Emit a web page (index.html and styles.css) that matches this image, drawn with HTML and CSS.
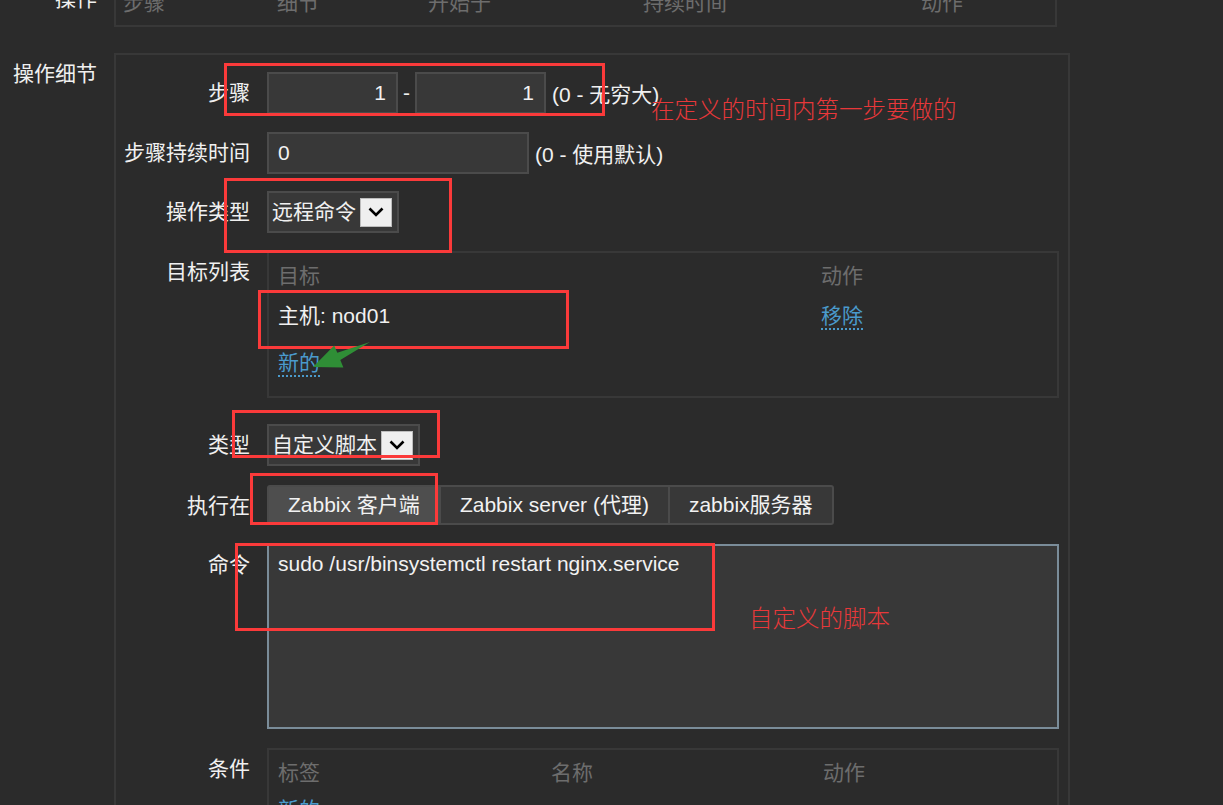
FILE: index.html
```html
<!DOCTYPE html>
<html lang="zh-CN">
<head>
<meta charset="utf-8">
<title>操作细节</title>
<link rel="stylesheet" href="styles.css">
</head>
<body>
<div class="page">
  <section class="form-row ops-row">
    <div class="outer-label">操作</div>
    <div class="ops-table">
      <span>步骤</span><span>细节</span><span>开始于</span><span>持续时间</span><span>动作</span>
    </div>
  </section>

  <section class="form-row details-row">
    <div class="outer-label">操作细节</div>
    <div class="details-box">
      <div class="field field-step">
        <div class="field-label">步骤</div>
        <div class="field-body">
          <input class="text-input step-input" type="text" value="1">
          <span class="dash">-</span>
          <input class="text-input step-input" type="text" value="1">
          <span class="hint">(0 - 无穷大)</span>
        </div>
      </div>

      <div class="field field-duration">
        <div class="field-label">步骤持续时间</div>
        <div class="field-body">
          <input class="text-input duration-input" type="text" value="0">
          <span class="hint">(0 - 使用默认)</span>
        </div>
      </div>

      <div class="field field-optype">
        <div class="field-label">操作类型</div>
        <div class="field-body">
          <div class="select">
            <span class="select-text">远程命令</span>
            <span class="select-arrow"><svg width="16" height="10" viewBox="0 0 16 10"><path d="M1.5 1.5 L8 8 L14.5 1.5" fill="none" stroke="#000" stroke-width="2.6"/></svg></span>
          </div>
        </div>
      </div>

      <div class="field field-targets">
        <div class="field-label">目标列表</div>
        <div class="list-box">
          <div class="list-row list-head"><span>目标</span><span>动作</span></div>
          <div class="list-row list-item"><span>主机: nod01</span><span><a class="link">移除</a></span></div>
          <div class="list-new"><a class="link">新的</a></div>
        </div>
      </div>

      <div class="field field-type">
        <div class="field-label">类型</div>
        <div class="field-body">
          <div class="select">
            <span class="select-text">自定义脚本</span>
            <span class="select-arrow"><svg width="16" height="10" viewBox="0 0 16 10"><path d="M1.5 1.5 L8 8 L14.5 1.5" fill="none" stroke="#000" stroke-width="2.6"/></svg></span>
          </div>
        </div>
      </div>

      <div class="field field-exec">
        <div class="field-label">执行在</div>
        <div class="segmented">
          <span class="seg-btn seg-active">Zabbix 客户端</span>
          <span class="seg-btn">Zabbix server (代理)</span>
          <span class="seg-btn">zabbix服务器</span>
        </div>
      </div>

      <div class="field field-command">
        <div class="field-label">命令</div>
        <textarea class="command-input">sudo /usr/binsystemctl restart nginx.service</textarea>
      </div>

      <div class="field field-conditions">
        <div class="field-label">条件</div>
        <div class="cond-box">
          <div class="cond-row cond-head"><span>标签</span><span>名称</span><span>动作</span></div>
          <div class="list-new cond-new"><a class="link">新的</a></div>
        </div>
      </div>
    </div>
  </section>

  <div class="mark mark-step"></div>
  <div class="mark mark-optype"></div>
  <div class="mark mark-host"></div>
  <div class="mark mark-type"></div>
  <div class="mark mark-exec"></div>
  <div class="mark mark-command"></div>
  <div class="note note-step">在定义的时间内第一步要做的</div>
  <div class="note note-script">自定义的脚本</div>
  <svg class="green-arrow" width="80" height="40" viewBox="0 0 80 40">
    <polygon points="70,7 37.3,17.7 34.2,10.4 13,32 43.4,32.4 40.3,25.1" fill="#2f8e36"/>
  </svg>
</div>
</body>
</html>
```

FILE: styles.css
```css
* { box-sizing: border-box; }

html, body {
  margin: 0;
  height: 805px;
  overflow: hidden;
  background: #2b2b2b;
}

body {
  font-family: "Liberation Sans", "Noto Sans CJK SC", sans-serif;
  font-size: 21px;
  color: #f0f0f0;
}

.page {
  position: relative;
  display: flow-root;
  width: 1223px;
  height: 805px;
}

.form-row {
  display: flex;
  align-items: flex-start;
}

.outer-label {
  width: 114px;
  flex-shrink: 0;
  padding-right: 17px;
  text-align: right;
  line-height: 42px;
  white-space: nowrap;
}

/* top operations table */
.ops-row { margin-top: -22px; }

.ops-table {
  width: 943px;
  height: 49px;
  border: 2px solid #383838;
  padding: 8px 0 0 7px;
  display: grid;
  grid-template-columns: 154px 151px 215px 278px 1fr;
  line-height: 30px;
  color: #6d6d6d;
}

/* operation details */
.details-row { margin-top: 26px; }

.details-box {
  width: 956px;
  height: 860px;
  border: 2px solid #383838;
  padding-top: 17px;
}

.field {
  display: flex;
  align-items: flex-start;
  margin-bottom: 18px;
}

.field-duration { margin-bottom: 17px; }
.field-targets { margin-bottom: 26px; }
.field-type { margin-bottom: 19px; }
.field-exec { margin-bottom: 17px; }
.field-command { margin-bottom: 19px; }

.field-label {
  width: 134px;
  flex-shrink: 0;
  margin-right: 17px;
  text-align: right;
  line-height: 42px;
  white-space: nowrap;
}

.field-body {
  display: flex;
  align-items: center;
  height: 42px;
}

.text-input {
  height: 42px;
  border: 2px solid #4b4b4b;
  background: #383838;
  color: #f2f2f2;
  font: inherit;
  padding: 0 9px;
  outline: none;
}

.step-input {
  width: 131px;
  text-align: right;
  padding-right: 10px;
}

.duration-input { width: 262px; }

.dash { margin: 0 5px; }
.hint { margin-left: 6px; white-space: nowrap; }

.select {
  display: flex;
  align-items: center;
  height: 42px;
  border: 2px solid #4b4b4b;
  background: #383838;
  padding: 0 5px 0 3px;
}

.select-text { line-height: 30px; white-space: nowrap; }

.select-arrow {
  display: flex;
  align-items: center;
  justify-content: center;
  width: 32px;
  height: 29px;
  margin-left: 4px;
  background: #efefef;
  border: 1px solid #bdbdbd;
}

/* target list */
.list-box {
  width: 792px;
  height: 147px;
  border: 2px solid #383838;
  padding: 8px 0 0 9px;
}

.list-row {
  display: grid;
  grid-template-columns: 543px 1fr;
  line-height: 30px;
}

.list-head { color: #6d6d6d; }
.list-item { margin-top: 10px; }

.list-new {
  margin-top: 17px;
  line-height: 30px;
}

.link {
  color: #4a9acb;
  text-decoration: underline dotted;
  text-decoration-thickness: 2px;
  text-underline-offset: 5px;
  cursor: pointer;
}

/* segmented control */
.segmented {
  display: flex;
  height: 40px;
}

.seg-btn {
  height: 40px;
  line-height: 36px;
  padding: 0 19px;
  border: 2px solid #4b4b4b;
  background: #383838;
  color: #f2f2f2;
  white-space: nowrap;
}

.seg-btn + .seg-btn { margin-left: -2px; }
.seg-btn:first-child { border-radius: 3px 0 0 3px; }
.seg-btn:last-child { border-radius: 0 3px 3px 0; }
.seg-active { background: #4e4e4e; }

/* command */
.command-input {
  width: 792px;
  height: 185px;
  border: 2px solid #7a8c99;
  background: #383838;
  color: #f2f2f2;
  font: inherit;
  line-height: 28px;
  padding: 4px 9px;
  resize: none;
  outline: none;
}

/* conditions */
.cond-box {
  width: 792px;
  height: 120px;
  border: 2px solid #383838;
  padding: 8px 0 0 9px;
}

.cond-row {
  display: grid;
  grid-template-columns: 273px 272px 1fr;
  line-height: 30px;
}

.cond-head { color: #6d6d6d; }
.cond-new { margin-top: 7px; }

/* annotations */
.mark {
  position: absolute;
  border: 3px solid #fb3a3a;
}

.mark-step { left: 224px; top: 63px; width: 381px; height: 53px; }
.mark-optype { left: 224px; top: 178px; width: 228px; height: 75px; }
.mark-host { left: 258px; top: 290px; width: 311px; height: 59px; }
.mark-type { left: 232px; top: 410px; width: 208px; height: 48px; }
.mark-exec { left: 250px; top: 473px; width: 188px; height: 52px; }
.mark-command { left: 235px; top: 543px; width: 480px; height: 88px; }

.note {
  position: absolute;
  color: #e8383a;
  font-family: "Noto Sans CJK SC", sans-serif;
  font-weight: 300;
  font-size: 23.5px;
  line-height: 30px;
  white-space: nowrap;
}

.note-step { left: 651px; top: 93px; }
.note-script { left: 749px; top: 602px; }

.green-arrow {
  position: absolute;
  left: 300px;
  top: 335px;
}
```
